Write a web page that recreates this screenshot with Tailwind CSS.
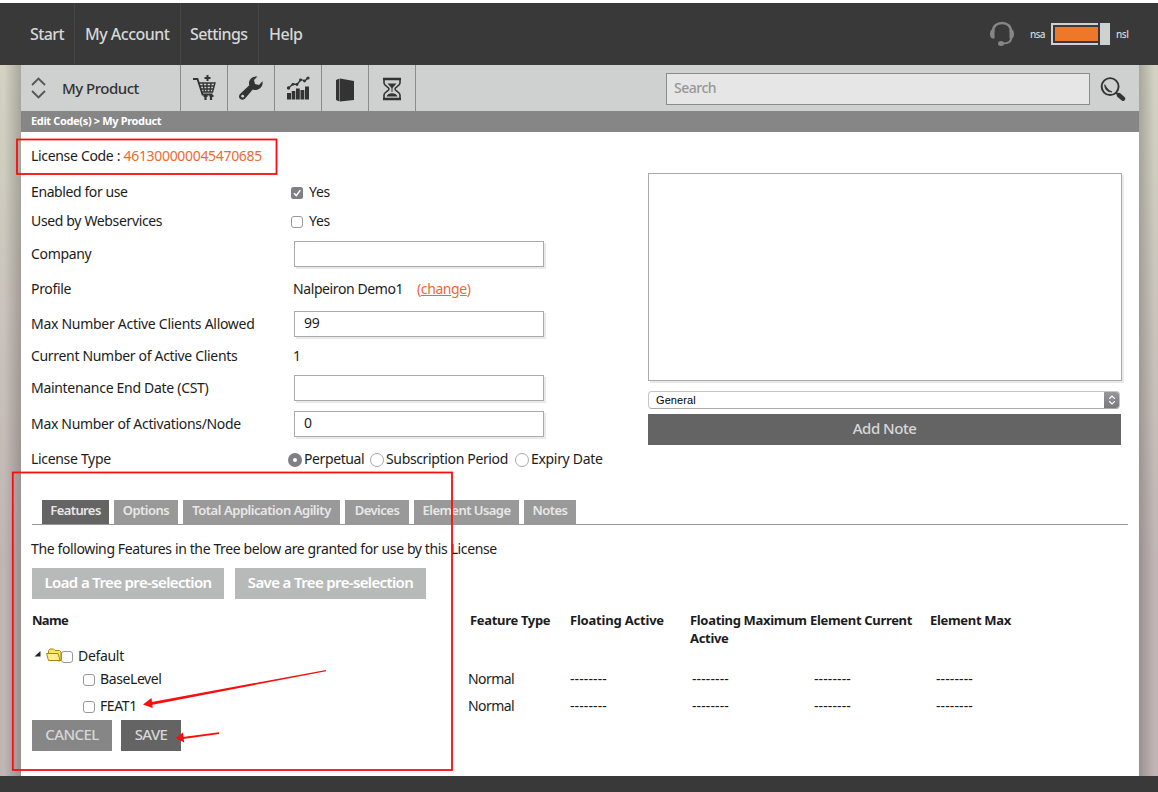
<!DOCTYPE html>
<html lang="en">
<head>
    <meta charset="UTF-8">
    <meta name="viewport" content="width=device-width, initial-scale=1.0">
    <title>Edit Code(s) - My Product</title>
    <script src="https://cdn.jsdelivr.net/npm/@tailwindcss/browser@4"></script>
</head>
<body class="relative h-[792px] w-[1158px] overflow-hidden bg-white pt-[3px] font-['Noto_Sans',sans-serif] text-sm leading-[18px] tracking-[-0.32px] text-[#1c1c1c]">
    <header class="flex h-[62px] items-center bg-[#393939] text-base text-[#d6d8d7]">
        <nav class="flex h-full font-medium">
            <a class="flex w-[75px] items-center border-r border-[#454545] pl-[30px] tracking-[-0.6px]">Start</a>
            <a class="flex w-[106px] items-center border-r border-[#454545] pl-[10px] tracking-[-0.5px]">My Account</a>
            <a class="flex w-[78px] items-center border-r border-[#454545] pl-[9px] tracking-[-0.6px]">Settings</a>
            <a class="flex items-center pl-[10px] tracking-[-0.5px]">Help</a>
        </nav>
        <div class="ml-auto flex items-center pr-[31px] text-[10px] font-medium">
            <svg class="mr-[15px] h-[26px] w-[26px]" viewBox="0 0 26 26" fill="none" stroke="#858786">
                <path d="M4 11C4 5 8 2 13 2s9 3 9 9" stroke-width="2.6"/>
                <path d="M22.500 15c0 6-3 7.500-9 7.500" stroke-width="2"/>
                <path d="M3.500 8.500h2v9h-1.500C2 17.500 1 15.500 1 13s1-4.500 2.500-4.500zM22.500 8.500h-2v9H22c2 0 3-2 3-4.500s-1-4.500-2.500-4.500z" fill="#858786" stroke="none"/>
                <ellipse cx="12" cy="22.500" rx="3" ry="2.500" fill="#858786" stroke="none"/>
            </svg>
            <span class="mr-[7px] w-[14px] tracking-[-0.7px]">nsa</span>
            <div class="flex h-[22px] w-[47px] border-2 border-r-0 border-[#cfd1d0] py-[2px] pl-[2px]"><div class="flex-1 bg-[#ed7829]"></div></div>
            <div class="mr-[6px] ml-[2px] h-[22px] w-[10px] bg-[#cfd1d0]"></div>
            <span class="w-[11px] tracking-[-0.5px]">nsl</span>
        </div>
    </header>

    <div class="flex h-[711px] bg-linear-to-b from-[#d3d2c3] to-[#c0b5b4] to-70%">
        <div class="w-[21px] bg-linear-to-r from-black/0 from-20% to-black/20"></div>
        <main class="w-[1118px] bg-white">
            <div class="flex h-[46px] bg-[#cfd1d0]">
                <div class="flex w-[160px] items-center border-r border-[#8a8c8b] pl-[10px] text-[15px] text-[#333]">
                    <svg class="mr-4 h-[22px] w-[15px]" viewBox="0 0 15 22" fill="none" stroke="#555" stroke-width="1.800"><path d="M1 8l6.500-6.500L14 8M1 14l6.500 6.500L14 14"/></svg>
                    <span class="font-medium tracking-[-0.5px]">My Product</span>
                </div>
                <div class="flex w-[47px] items-center justify-center border-r border-[#8a8c8b]">
                    <svg class="h-[26px] w-6" viewBox="0 0 24 26" fill="none" stroke="#333" stroke-width="1.400"><path d="M15.500 0v6M12.500 3h6" stroke-width="2"/><path d="M1 4h4.500l5 15.500h10" stroke-width="1.800"/><path d="M6.500 8h16.500l-2.500 9H9.500M7.500 11h14.500M8.500 14h13M11 8l1.500 9M15 8v9M19 8l-1 9"/><path d="M11.500 21h4M17.500 21h4M13.500 21v4M19 21v4" stroke-width="2.200"/></svg>
                </div>
                <div class="flex w-[47px] items-center justify-center border-r border-[#8a8c8b]">
                    <svg class="h-6 w-6" viewBox="0 0 24 24"><path d="M18.500.6C14.500-.2 10.500 2.500 10 6.500c-.1 1 0 2 .3 2.800L1.500 17.500c-2 1.800-1.900 4.200-.5 5.300 1.700 1.500 3.900 1 5.300-.6l7.500-8.600c4 1.700 9.200-1 9.800-6 .1-.9 0-1.700-.2-2.400L20 9l-4-.9-1-4z" fill="#333"/><circle cx="3.700" cy="20.200" r="1.400" fill="#cfd1d0"/></svg>
                </div>
                <div class="flex w-[47px] items-center justify-center border-r border-[#8a8c8b]">
                    <svg class="h-6 w-6" viewBox="0 0 24 24" fill="#333"><path d="M1 17h4v6.500H1zM5.700 15h3.600v8.500H5.700zM10 12.500h3.800v11H10zM14.500 14h3.800v9.500h-3.800zM19 10.500h4v13h-4z"/><path d="M2 12.500l5-4.500 4 .5 4-5 4 1.500 3-3.500" fill="none" stroke="#333" stroke-width="1.300"/><circle cx="2.500" cy="12" r="1.700"/><circle cx="7" cy="8.300" r="1.400"/><circle cx="11" cy="8.500" r="1.400"/><circle cx="14.500" cy="4" r="1.400"/><circle cx="18.500" cy="5" r="1.400"/><circle cx="22" cy="2" r="1.600"/></svg>
                </div>
                <div class="flex w-[47px] items-center justify-center border-r border-[#8a8c8b]">
                    <svg class="mt-[3px] h-[26px] w-5" viewBox="0 0 20 26" fill="#333"><path d="M1 3l3.500-1.500v23L1 23zM5 1.500L19 4v19L5 24.500z"/></svg>
                </div>
                <div class="flex w-[47px] items-center justify-center border-r border-[#8a8c8b]">
                    <svg class="mt-px h-6 w-5" viewBox="0 0 20 24" fill="none" stroke="#333" stroke-width="1.600"><path d="M1 2h18M1 22h18" stroke-width="2.600"/><path d="M2 2v4c0 3 5 4 5 6s-5 3-5 6v4M18 2v4c0 3-5 4-5 6s5 3 5 6v4"/><path d="M5.500 6.500h9L10 11.500zM4.500 19.500c1-4.500 10-4.500 11 0z" fill="#333" stroke="none"/><path d="M10 10v5" stroke-width="1"/></svg>
                </div>
                <div class="ml-auto flex items-center pt-[1px] pr-[13px]">
                    <div class="mr-[10px] flex h-8 w-[424px] items-center border border-[#8a8c8b] bg-[#e6e6e6] pb-px pl-[7px] font-medium tracking-[-0.5px] text-[#979797]">Search</div>
                    <svg class="h-[26px] w-[26px]" viewBox="0 0 27 26" fill="none" stroke="#333"><circle cx="10.500" cy="10.500" r="8.800" stroke-width="2"/><path d="M5 8.500c-.5 4.500 3 8 7.500 7.500C9 14.500 6.500 12 5 8.500z" fill="#333" stroke-width=".8"/><path d="M16.500 16.500l3 3" stroke-width="2"/><path d="M19.800 19.500l4 3.500" stroke-width="4.800" stroke-linecap="round"/></svg>
                </div>
            </div>
            <div class="flex h-[21px] items-center bg-[#868686] pb-px pl-[10px] text-[11px] font-bold tracking-[-0.35px] text-white">Edit Code(s) &gt; My Product</div>

            <div class="flex h-[348px] pt-[6px] pl-[10px]">
                <div class="w-[617px]">
                    <div class="flex h-9 items-center"><span>License Code : <span class="text-[#ee6a31]">461300000045470685</span></span></div>
                    <div class="flex h-9 items-center">
                        <span class="w-[260px] tracking-[-0.4px]">Enabled for use</span>
                        <svg class="mt-[2px] mr-[6px] h-3 w-3" viewBox="0 0 12 12"><rect width="12" height="12" rx="2.500" fill="#7f7f84"/><path d="M3 6.300l2.300 2.300 4-5.500" fill="none" stroke="#fff" stroke-width="1.600"/></svg>
                        <span>Yes</span>
                    </div>
                    <div class="flex h-[22px] items-center">
                        <span class="w-[260px] tracking-[-0.35px]">Used by Webservices</span>
                        <span class="mt-[2px] mr-[6px] h-3 w-3 rounded-[3px] border border-[#999]"></span>
                        <span>Yes</span>
                    </div>
                    <div class="flex h-11 items-center">
                        <span class="w-[263px]">Company</span>
                        <div class="h-[26px] w-[250px] border border-[#aaa] shadow-[2px_2px_0_#e9e9e9]"></div>
                    </div>
                    <div class="flex h-[26px] items-center">
                        <span class="w-[262px]">Profile</span>
                        <span class="w-[111px] tracking-[-0.4px]">Nalpeiron Demo1</span>
                        <span class="ml-[13px] tracking-[-0.4px] text-[#ee6a31]">(<a class="underline">change</a>)</span>
                    </div>
                    <div class="flex h-11 items-center">
                        <span class="w-[263px] tracking-[-0.28px]">Max Number Active Clients Allowed</span>
                        <div class="flex h-[26px] w-[250px] items-center border border-[#aaa] pb-[2px] pl-[9px] shadow-[2px_2px_0_#e9e9e9]">99</div>
                    </div>
                    <div class="flex h-5 items-center">
                        <span class="w-[262px]">Current Number of Active Clients</span>
                        <span>1</span>
                    </div>
                    <div class="flex h-11 items-center">
                        <span class="w-[263px] tracking-[-0.3px]">Maintenance End Date (CST)</span>
                        <div class="h-[26px] w-[250px] border border-[#aaa] shadow-[2px_2px_0_#e9e9e9]"></div>
                    </div>
                    <div class="flex h-7 items-center">
                        <span class="w-[263px]">Max Number of Activations/Node</span>
                        <div class="flex h-[26px] w-[250px] items-center border border-[#aaa] pb-[2px] pl-[9px] shadow-[2px_2px_0_#e9e9e9]">0</div>
                    </div>
                    <div class="flex h-[42px] items-center">
                        <span class="w-[257px]">License Type</span>
                        <span class="mt-[2px] mr-[2px] flex h-[14px] w-[14px] items-center justify-center rounded-full bg-[#7f7f84]"><span class="h-1 w-1 rounded-full bg-white"></span></span>
                        <span class="w-[66px] tracking-[-0.4px]">Perpetual</span>
                        <span class="mt-[2px] mr-[2px] h-[14px] w-[14px] rounded-full border border-[#aaa]"></span>
                        <span class="w-[129px] tracking-[-0.35px]">Subscription Period</span>
                        <span class="mt-[2px] mr-[2px] h-[14px] w-[14px] rounded-full border border-[#aaa]"></span>
                        <span>Expiry Date</span>
                    </div>
                </div>
                <div class="pt-[35px]">
                    <div class="h-[208px] w-[474px] border border-[#aaa] shadow-[2px_2px_0_#e9e9e9]"></div>
                    <div class="mt-[10px] flex h-[18px] w-[472px] items-center overflow-hidden rounded-[4px] border border-[#c4c4c4] border-b-[#a9a9a9] pl-[7px] font-['Liberation_Sans',sans-serif] text-[11px] tracking-[0.1px] text-black">
                        General
                        <span class="ml-auto flex h-[18px] w-[15px] items-center justify-center bg-linear-to-b from-[#98989d] to-[#77777c]">
                            <svg class="h-[10px] w-2" viewBox="0 0 8 10" fill="none" stroke="#fff" stroke-width="1.200"><path d="M1.200 3.700L4 1l2.800 2.700M1.200 6.300L4 9l2.800-2.700"/></svg>
                        </span>
                    </div>
                    <div class="mt-[5px] flex h-[31px] w-[473px] items-center justify-center bg-[#646464] pb-[3px] text-[15px] font-medium tracking-[-0.5px] text-[#d6d8d7]">Add Note</div>
                </div>
            </div>

            <div class="px-[11px] pt-5">
                <div class="flex w-[1096px] gap-[5px] border-b border-[#999] pl-[10px] text-[13px] font-semibold text-[#e8e8e8]">
                    <div class="flex h-6 w-[67px] items-center justify-center bg-[#646464] pb-[4px] tracking-[-0.6px]">Features</div>
                    <div class="flex h-6 w-[64px] items-center justify-center bg-[#999] pb-[4px] tracking-[-0.5px]">Options</div>
                    <div class="flex h-6 w-[157px] items-center justify-center bg-[#999] pb-[4px] tracking-[-0.45px]">Total Application Agility</div>
                    <div class="flex h-6 w-[64px] items-center justify-center bg-[#999] pb-[4px] tracking-[-0.5px]">Devices</div>
                    <div class="flex h-6 w-[105px] items-center justify-center bg-[#999] pb-[4px] tracking-[-0.55px]">Element Usage</div>
                    <div class="flex h-6 w-[52px] items-center justify-center bg-[#999] pb-[4px] tracking-[-0.55px]">Notes</div>
                </div>
                <p class="-ml-px pt-[15px] pb-[10px] tracking-[-0.38px]">The following Features in the Tree below are granted for use by this License</p>
                <div class="flex gap-[11px] text-[15px] font-semibold tracking-[-0.63px] text-white">
                    <div class="flex h-[31px] w-[192px] items-center justify-center bg-[#b8bab9] pb-[3px]">Load a Tree pre-selection</div>
                    <div class="flex h-[31px] w-[191px] items-center justify-center bg-[#b8bab9] pb-[3px]">Save a Tree pre-selection</div>
                </div>
                <div class="mt-[12px] flex h-9 text-[13px] font-bold tracking-[-0.32px]">
                    <span class="w-[438px] tracking-[-0.7px]">Name</span>
                    <span class="w-[100px]">Feature Type</span>
                    <span class="w-[120px] tracking-[-0.2px]">Floating Active</span>
                    <span class="w-[120px] whitespace-nowrap">Floating Maximum<br>Active</span>
                    <span class="w-[120px]">Element Current</span>
                    <span>Element Max</span>
                </div>
                <div class="flex h-[18px] items-center">
                    <svg class="mr-[5px] ml-[2px] h-[6px] w-[7px] -translate-y-[2px]" viewBox="0 0 7 6"><path d="M6.500 0v5.500H.5z" fill="#222"/></svg>
                    <svg class="h-[14px] w-4 -translate-y-px" viewBox="0 0 16 14" fill="#fbe45f" stroke="#a88716"><path d="M2.500 11V2.500L4 1h3.500L9 2.500h4.500l1.500 1.500v8l-1 1z"/><path d="M.6 5.500h11.500l1.900 7H2.500z" fill="#fff08a"/></svg>
                    <span class="mt-[2px] mr-[5px] -ml-px h-3 w-3 rounded-[3px] border border-[#999] bg-white"></span>
                    <span>Default</span>
                </div>
                <div class="flex h-7 items-center">
                    <span class="mt-[2px] mr-[5px] ml-[51px] h-3 w-3 rounded-[3px] border border-[#999]"></span>
                    <span class="w-[368px] tracking-[-0.4px]">BaseLevel</span>
                    <span class="w-[102px] tracking-[-0.55px]">Normal</span>
                    <span class="w-[122px] tracking-[0.1px]">--------</span>
                    <span class="w-[122px] tracking-[0.1px]">--------</span>
                    <span class="w-[122px] tracking-[0.1px]">--------</span>
                    <span class="tracking-[0.1px]">--------</span>
                </div>
                <div class="flex h-[27px] items-center pb-[2px]">
                    <span class="mt-[2px] mr-[5px] ml-[51px] h-3 w-3 rounded-[3px] border border-[#999]"></span>
                    <span class="w-[368px] tracking-[-0.4px]">FEAT1</span>
                    <span class="w-[102px] tracking-[-0.55px]">Normal</span>
                    <span class="w-[122px] tracking-[0.1px]">--------</span>
                    <span class="w-[122px] tracking-[0.1px]">--------</span>
                    <span class="w-[122px] tracking-[0.1px]">--------</span>
                    <span class="tracking-[0.1px]">--------</span>
                </div>
                <div class="flex gap-[9px] text-[15px] font-medium tracking-[-0.6px] text-[#d6d8d7]">
                    <div class="flex h-[31px] w-[80px] items-center justify-center bg-[#868686] pb-[3px]">CANCEL</div>
                    <div class="flex h-[31px] w-[60px] items-center justify-center bg-[#646464] pb-[3px]">SAVE</div>
                </div>
            </div>
        </main>
        <div class="w-[19px] bg-linear-to-l from-black/0 from-20% to-black/20"></div>
    </div>
    <footer class="h-4 bg-[#393939]"></footer>

    <!-- red callouts -->
    <svg class="absolute top-0 left-0 h-[792px] w-[1158px]" viewBox="0 0 1158 792" fill="none" stroke="#fb0d0d" stroke-width="1.800">
        <rect x="17" y="139.500" width="259.500" height="34.500"/>
        <rect x="12.800" y="472.500" width="439.200" height="297.500"/>
        <path d="M326 670v1.200L150 705.200l-1-2.700z" fill="#fb0d0d" stroke="none"/>
        <path d="M143 704.500l8.500-6.500 1.200 10z" fill="#fb0d0d" stroke="none"/>
        <path d="M219 732.300v1.700L183 739l-.3-2z" fill="#fb0d0d" stroke="none"/>
        <path d="M175.500 738l7.500-5.500 1.200 10z" fill="#fb0d0d" stroke="none"/>
    </svg>
</body>
</html>
